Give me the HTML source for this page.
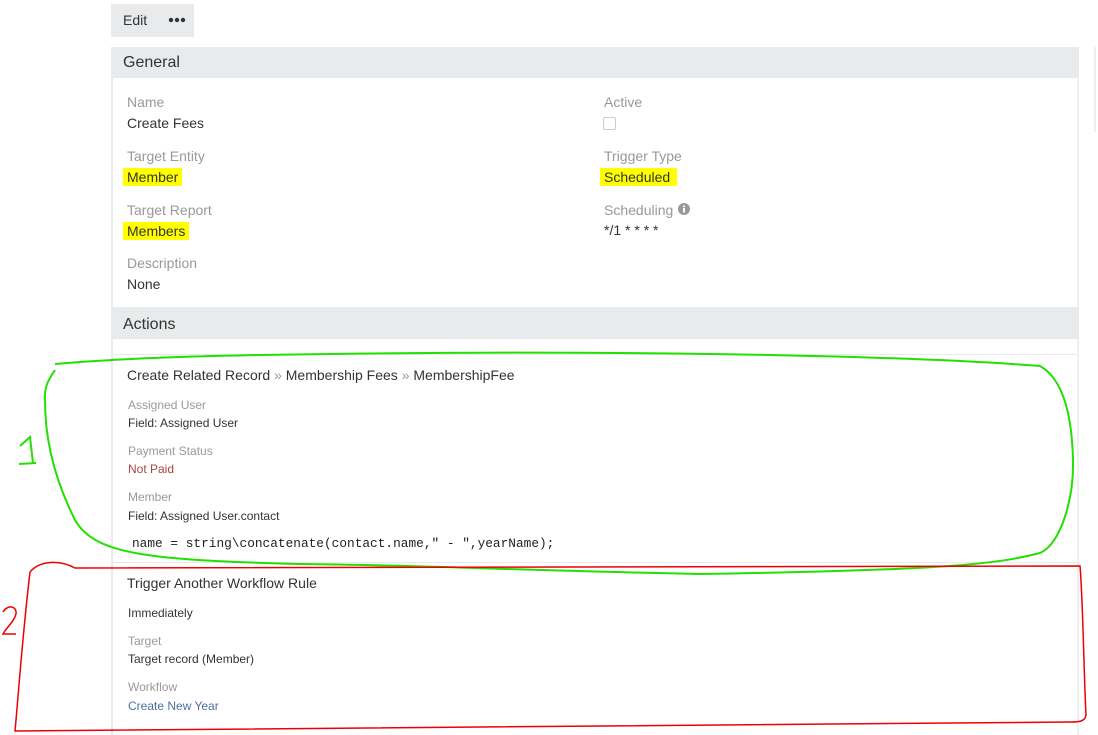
<!DOCTYPE html>
<html><head><meta charset="utf-8"><style>
body{margin:0;width:1098px;height:735px;background:#fff;font-family:"Liberation Sans",sans-serif;position:relative;overflow:hidden;color:#333}
.a{position:absolute;white-space:nowrap}
.lbl{color:#999;font-size:14px}
.val{color:#333;font-size:14px}
.s{font-size:12px}
.hl{background:#ffff00;padding:1px 4px 1px 4px;margin-left:-4px}
</style></head><body>
<div class="a" style="left:111px;top:4px;width:83px;height:33px;background:#e8eaeb"></div>
<div class="a" style="left:123px;top:12px;font-size:14px">Edit</div>
<svg class="a" style="left:168px;top:17px" width="18" height="6"><circle cx="3" cy="3" r="2.2" fill="#333"/><circle cx="9" cy="3" r="2.2" fill="#333"/><circle cx="15" cy="3" r="2.2" fill="#333"/></svg>
<div class="a" style="left:111px;top:47px;width:968px;height:31px;background:#e8eaeb"></div>
<div class="a" style="left:123px;top:54px;font-size:16px;color:#333">General</div>
<div class="a" style="left:111px;top:78px;width:2px;height:657px;background:#e8eaeb"></div>
<div class="a" style="left:1077px;top:78px;width:2px;height:657px;background:#eef0f1"></div>
<div class="a" style="left:1094px;top:47px;width:2px;height:85px;background:#eee"></div>
<div class="a lbl" style="left:127px;top:94px">Name</div>
<div class="a val" style="left:127px;top:115px">Create Fees</div>
<div class="a lbl" style="left:127px;top:148px">Target Entity</div>
<div class="a val" style="left:127px;top:169px"><span class="hl">Member</span></div>
<div class="a lbl" style="left:127px;top:202px">Target Report</div>
<div class="a val" style="left:127px;top:223px"><span class="hl">Members</span></div>
<div class="a lbl" style="left:127px;top:255px">Description</div>
<div class="a val" style="left:127px;top:276px">None</div>
<div class="a lbl" style="left:604px;top:94px">Active</div>
<div class="a" style="left:603px;top:117px;width:11px;height:11px;border:1px solid #ccc;border-radius:2px"></div>
<div class="a lbl" style="left:604px;top:148px">Trigger Type</div>
<div class="a val" style="left:604px;top:169px"><span class="hl" style="padding-right:7px">Scheduled</span></div>
<div class="a lbl" style="left:604px;top:202px">Scheduling</div>
<svg class="a" style="left:678px;top:203px" width="12" height="12"><circle cx="6" cy="6" r="6" fill="#999"/><rect x="5" y="5" width="2" height="4.5" fill="#fff"/><rect x="5" y="2.5" width="2" height="1.6" fill="#fff"/></svg>
<div class="a val" style="left:604px;top:222px">*/1 * * * *</div>
<div class="a" style="left:111px;top:307px;width:968px;height:32px;background:#e8eaeb"></div>
<div class="a" style="left:123px;top:316px;font-size:16px">Actions</div>
<div class="a" style="left:113px;top:354px;width:964px;height:1px;background:#e8eaeb"></div>
<div class="a" style="left:127px;top:367px;font-size:14px">Create Related Record <span style="color:#999">»</span> Membership Fees <span style="color:#999">»</span> MembershipFee</div>
<div class="a lbl s" style="left:128px;top:398px">Assigned User</div>
<div class="a s" style="left:128px;top:416px">Field: Assigned User</div>
<div class="a lbl s" style="left:128px;top:444px">Payment Status</div>
<div class="a s" style="left:128px;top:462px;color:#a94442">Not Paid</div>
<div class="a lbl s" style="left:128px;top:490px">Member</div>
<div class="a s" style="left:128px;top:509px">Field: Assigned User.contact</div>
<div class="a" style="left:132px;top:536px;font-family:'Liberation Mono',monospace;font-size:12.8px;color:#222">name = string\concatenate(contact.name," - ",yearName);</div>
<div class="a" style="left:113px;top:562px;width:964px;height:1px;background:#e8eaeb"></div>
<div class="a" style="left:127px;top:575px;font-size:14px">Trigger Another Workflow Rule</div>
<div class="a s" style="left:128px;top:606px">Immediately</div>
<div class="a lbl s" style="left:128px;top:634px">Target</div>
<div class="a s" style="left:128px;top:652px">Target record (Member)</div>
<div class="a lbl s" style="left:128px;top:680px">Workflow</div>
<div class="a s" style="left:128px;top:699px;color:#4a6fa5">Create New Year</div>
<svg class="a" style="left:0;top:0" width="1098" height="735">
<path d="M55,364 C150,356 250,355 330,354 C600,350 900,355 1040,366 C1065,380 1072,420 1073,460 C1074,500 1060,545 1040,553 C1000,563 960,570 700,574 C500,570 420,565 300,564 C150,560 95,555 75,520 C50,470 45,430 45,400 C44,385 50,378 55,370" fill="none" stroke="#22e000" stroke-width="2"/>
<path d="M20,446 L30,437 L33,463 M19,464 L36,463" fill="none" stroke="#22e000" stroke-width="2"/>
<path d="M30,572 C40,560 60,560 75,568 L1080,566 C1083,600 1084,680 1086,715 C1085,722 1078,722 1070,722 L15,731 C18,700 22,640 30,572" fill="none" stroke="#e00" stroke-width="1.5"/>
<path d="M3,612 C8,604 17,606 16,614 C14,622 6,628 3,634 L16,634" fill="none" stroke="#e00" stroke-width="1.5"/>
</svg>
</body></html>
